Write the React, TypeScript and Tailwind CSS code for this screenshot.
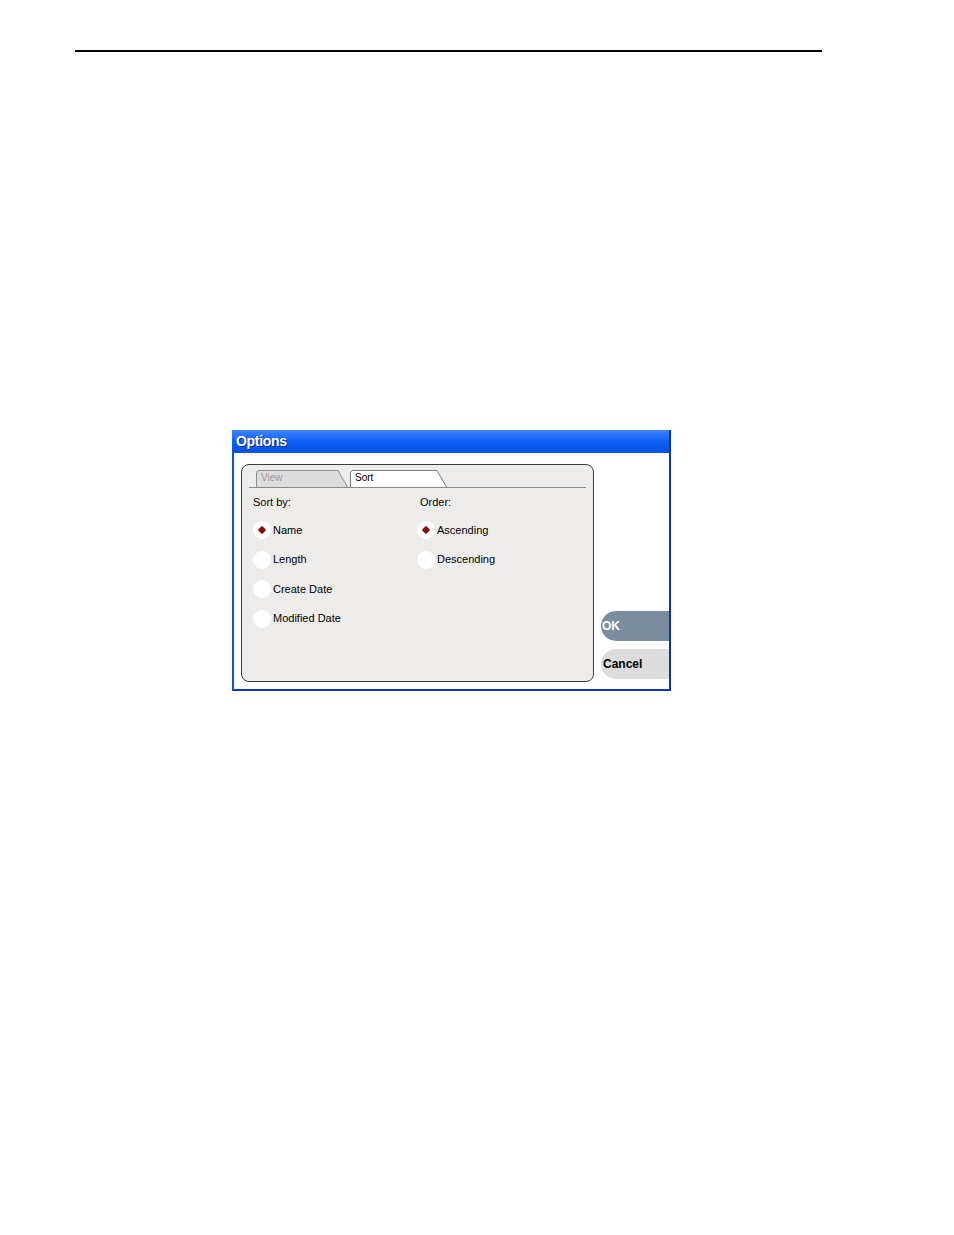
import React from "react";

const font = { fontFamily: '"Liberation Sans", Arial, sans-serif' };

function Radio({ label, checked }: { label: string; checked?: boolean }) {
  return (
    <div className="flex h-[18px] items-center">
      <span className="flex h-[18px] w-[18px] items-center justify-center rounded-full bg-white">
        {checked && <span className="h-[6px] w-[6px] rotate-45 rounded-[1px] bg-[#8a0a0a]" />}
      </span>
      <span className="ml-[2px] text-[11px] leading-none text-black">{label}</span>
    </div>
  );
}

function Tab({ label, active, width }: { label: string; active?: boolean; width: number }) {
  return (
    <div className="relative h-[17px]" style={{ width }}>
      <svg className="absolute inset-0" width={width} height={17} viewBox={`0 0 ${width} 17`}>
        <path
          d={`M0.5 17 V3 Q0.5 0.5 3 0.5 H${width - 10} L${width - 0.5} 17`}
          fill={active ? "#ffffff" : "#dcdcdc"}
          stroke={active ? "#7a7a7a" : "#8c8c8c"}
          strokeWidth="1"
        />
      </svg>
      <span
        className={`relative block pl-[5px] pt-[1px] text-[10px] leading-[13px] ${
          active ? "text-black" : "text-[#9a9a9a]"
        }`}
      >
        {label}
      </span>
    </div>
  );
}

export default function App() {
  return (
    <div className="h-[1235px] w-[954px] overflow-hidden bg-white pt-[50px]" style={font}>
      <div className="ml-[75px] h-[2px] w-[747px] bg-black" />

      <div className="ml-[232px] mt-[378px] flex h-[261px] w-[439px] flex-col">
        <div className="flex h-[23px] items-center border-r-2 border-[#0831b8] bg-gradient-to-b from-[#3b84ff] via-[#0b5ef4] to-[#0753e6] pl-[4px]">
          <span
            className="text-[14px] font-bold tracking-[-0.3px] text-white"
            style={{ textShadow: "1px 1px 0 #0a2a8a" }}
          >
            Options
          </span>
        </div>

        <div className="flex flex-1 border-x-2 border-b-2 border-l-[#1450e8] border-r-[#0831b8] border-b-[#0a35c8] bg-white">
          <div className="ml-[7px] mt-[11px] h-[218px] w-[353px] rounded-[8px] border border-[#3a3a3a] bg-[#edecea] pt-[5px]">
            <div className="flex pl-[14px]">
              <Tab label="View" width={92} />
              <div className="w-[2px]" />
              <Tab label="Sort" active width={97} />
            </div>
            <div className="mx-[7px] h-[1px] bg-[#8a8a8a]" />

            <div className="mt-[8px] flex">
              <div className="ml-[11px] w-[164px]">
                <div className="h-[13px] text-[11px] leading-[13px] text-black">Sort by:</div>
                <div className="mt-[12px] flex flex-col gap-[11.5px]">
                  <Radio label="Name" checked />
                  <Radio label="Length" />
                  <Radio label="Create Date" />
                  <Radio label="Modified Date" />
                </div>
              </div>
              <div>
                <div className="ml-[3px] h-[13px] text-[11px] leading-[13px] text-black">Order:</div>
                <div className="mt-[12px] flex flex-col gap-[11.5px]">
                  <Radio label="Ascending" checked />
                  <Radio label="Descending" />
                </div>
              </div>
            </div>
          </div>

          <div className="ml-[7px] flex flex-1 flex-col pt-[158px]">
            <div className="flex h-[30px] items-center rounded-l-full bg-[#7a8d9e] pl-[1px] text-[12px] font-bold text-white">
              OK
            </div>
            <div className="mt-[8px] flex h-[30px] items-center rounded-l-full bg-[#dcdcdc] pl-[2px] text-[12px] font-bold text-black">
              Cancel
            </div>
          </div>
        </div>
      </div>
    </div>
  );
}
